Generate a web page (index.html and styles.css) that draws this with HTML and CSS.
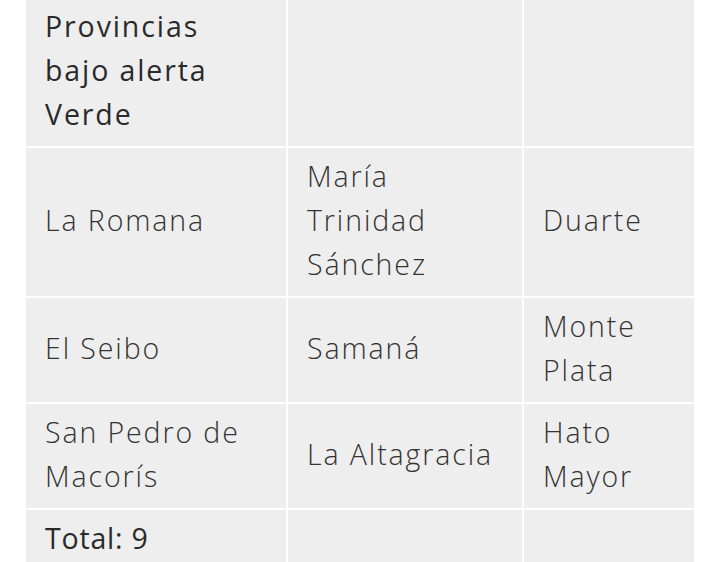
FILE: index.html
```html
<!DOCTYPE html>
<html lang="es">
<head>
<meta charset="utf-8">
<link rel="stylesheet" href="styles.css">
</head>
<body>
<table class="alert-table">
  <colgroup>
    <col class="c1"><col class="c2"><col class="c3">
  </colgroup>
  <tr class="head-row">
    <th>Provincias bajo alerta Verde</th>
    <th></th>
    <th></th>
  </tr>
  <tr><td>La Romana</td><td>María Trinidad Sánchez</td><td>Duarte</td></tr>
  <tr><td>El Seibo</td><td>Samaná</td><td>Monte Plata</td></tr>
  <tr><td>San Pedro de Macorís</td><td>La Altagracia</td><td>Hato Mayor</td></tr>
  <tr class="total-row"><th>Total: 9</th><td></td><td></td></tr>
</table>
</body>
</html>
```
FILE: styles.css
```css
html, body {
  margin: 0;
  padding: 0;
  background: #ffffff;
}
body {
  overflow: hidden;
  height: 562px;
}
.alert-table {
  margin: -4px 0 0 24px;
  border-collapse: separate;
  border-spacing: 2px;
  table-layout: fixed;
  width: 672px;
  font-family: "Open Sans", "DejaVu Sans", sans-serif;
  font-size: 28.5px;
  line-height: 44px;
  color: #333333;
}
.c1 { width: 260px; }
.c2 { width: 234px; }
.c3 { width: 170px; }
.alert-table th,
.alert-table td {
  background: #eeeeee;
  padding: 6px 19px 10px;
  text-align: left;
  vertical-align: middle;
}
.alert-table td {
  font-weight: 300;
  letter-spacing: 1.9px;
}
.alert-table th {
  font-weight: 500;
  color: #2a2a2a;
  letter-spacing: 1.9px;
}
.head-row th {
  vertical-align: top;
}
.total-row th {
  letter-spacing: 0.8px;
}
```
